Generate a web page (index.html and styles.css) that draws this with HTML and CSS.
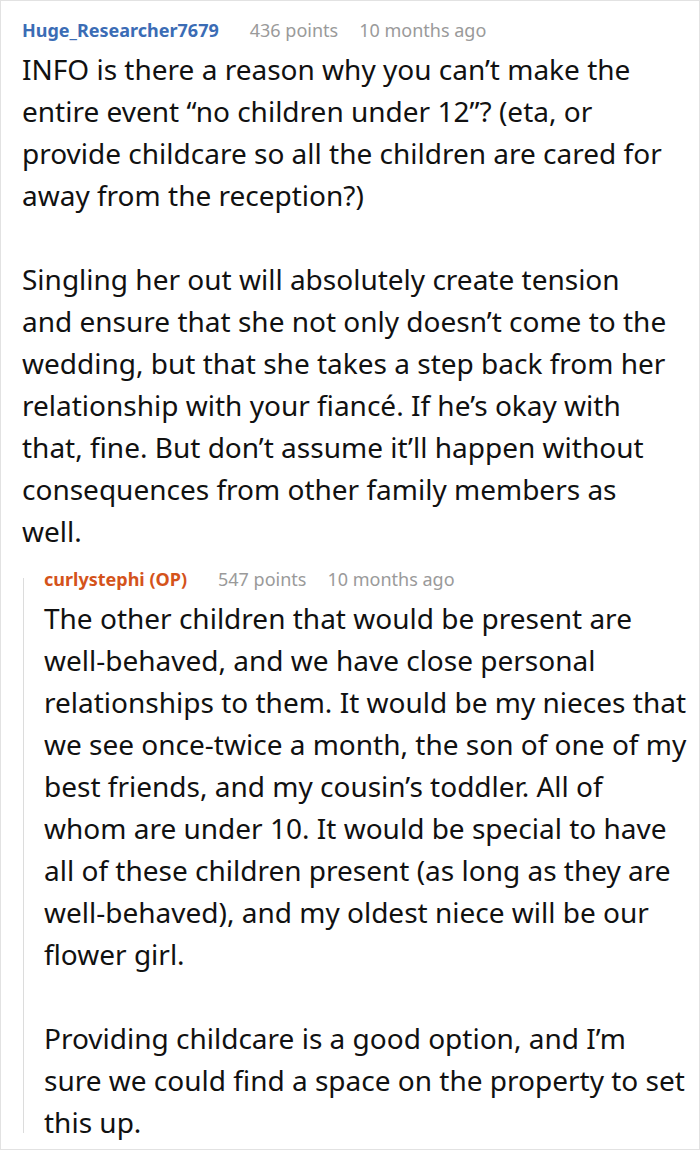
FILE: index.html
```html
<!DOCTYPE html>
<html>
<head>
<meta charset="utf-8">
<link rel="stylesheet" href="styles.css">
</head>
<body>
<div class="thread">
  <div class="comment">
    <div class="meta">
      <span class="user user-blue">Huge_Researcher7679</span>
      <span class="info">436 points</span>
      <span class="info">10 months ago</span>
    </div>
    <div class="body">
      <p>INFO is there a reason why you can’t make the<br>entire event “no children under 12”? (eta, or<br>provide childcare so all the children are cared for<br>away from the reception?)</p>
      <p>Singling her out will absolutely create tension<br>and ensure that she not only doesn’t come to the<br>wedding, but that she takes a step back from her<br>relationship with your fiancé. If he’s okay with<br>that, fine. But don’t assume it’ll happen without<br>consequences from other family members as<br>well.</p>
    </div>
  </div>
  <div class="comment reply">
    <div class="meta">
      <span class="user user-orange">curlystephi (OP)</span>
      <span class="info">547 points</span>
      <span class="info">10 months ago</span>
    </div>
    <div class="body">
      <p>The other children that would be present are<br>well-behaved, and we have close personal<br>relationships to them. It would be my nieces that<br>we see once-twice a month, the son of one of my<br>best friends, and my cousin’s toddler. All of<br>whom are under 10. It would be special to have<br>all of these children present (as long as they are<br>well-behaved), and my oldest niece will be our<br>flower girl.</p>
      <p>Providing childcare is a good option, and I’m<br>sure we could find a space on the property to set<br>this up.</p>
    </div>
  </div>
</div>
</body>
</html>
```
FILE: styles.css
```css
html, body {
  margin: 0;
  padding: 0;
  background: #ffffff;
}
.thread {
  box-sizing: border-box;
  width: 700px;
  height: 1150px;
  border: 1px solid #e2e2e2;
  padding: 11px 0 0 21px;
  font-family: "Noto Sans", "Open Sans", sans-serif;
  color: #111;
  overflow: hidden;
}
.meta {
  display: flex;
  align-items: center;
  height: 36px;
  font-size: 18px;
  white-space: nowrap;
}
.user {
  font-weight: 700;
  margin-right: 31px;
}
.user-blue { color: #3b6cb5; }
.user-orange { color: #d4531b; }
.info {
  color: #9a9a9a;
  margin-right: 21px;
}
.body {
  font-size: 28px;
  line-height: 42px;
  white-space: nowrap;
}
.body p {
  margin: 0 0 42px 0;
}
.body p:last-child {
  margin-bottom: 0;
}
.reply {
  margin-top: 9px;
  margin-left: 1px;
  padding-left: 21px;
  background: linear-gradient(#dcdcdc, #dcdcdc) no-repeat 0 17px / 1px calc(100% - 27px);
}
```
